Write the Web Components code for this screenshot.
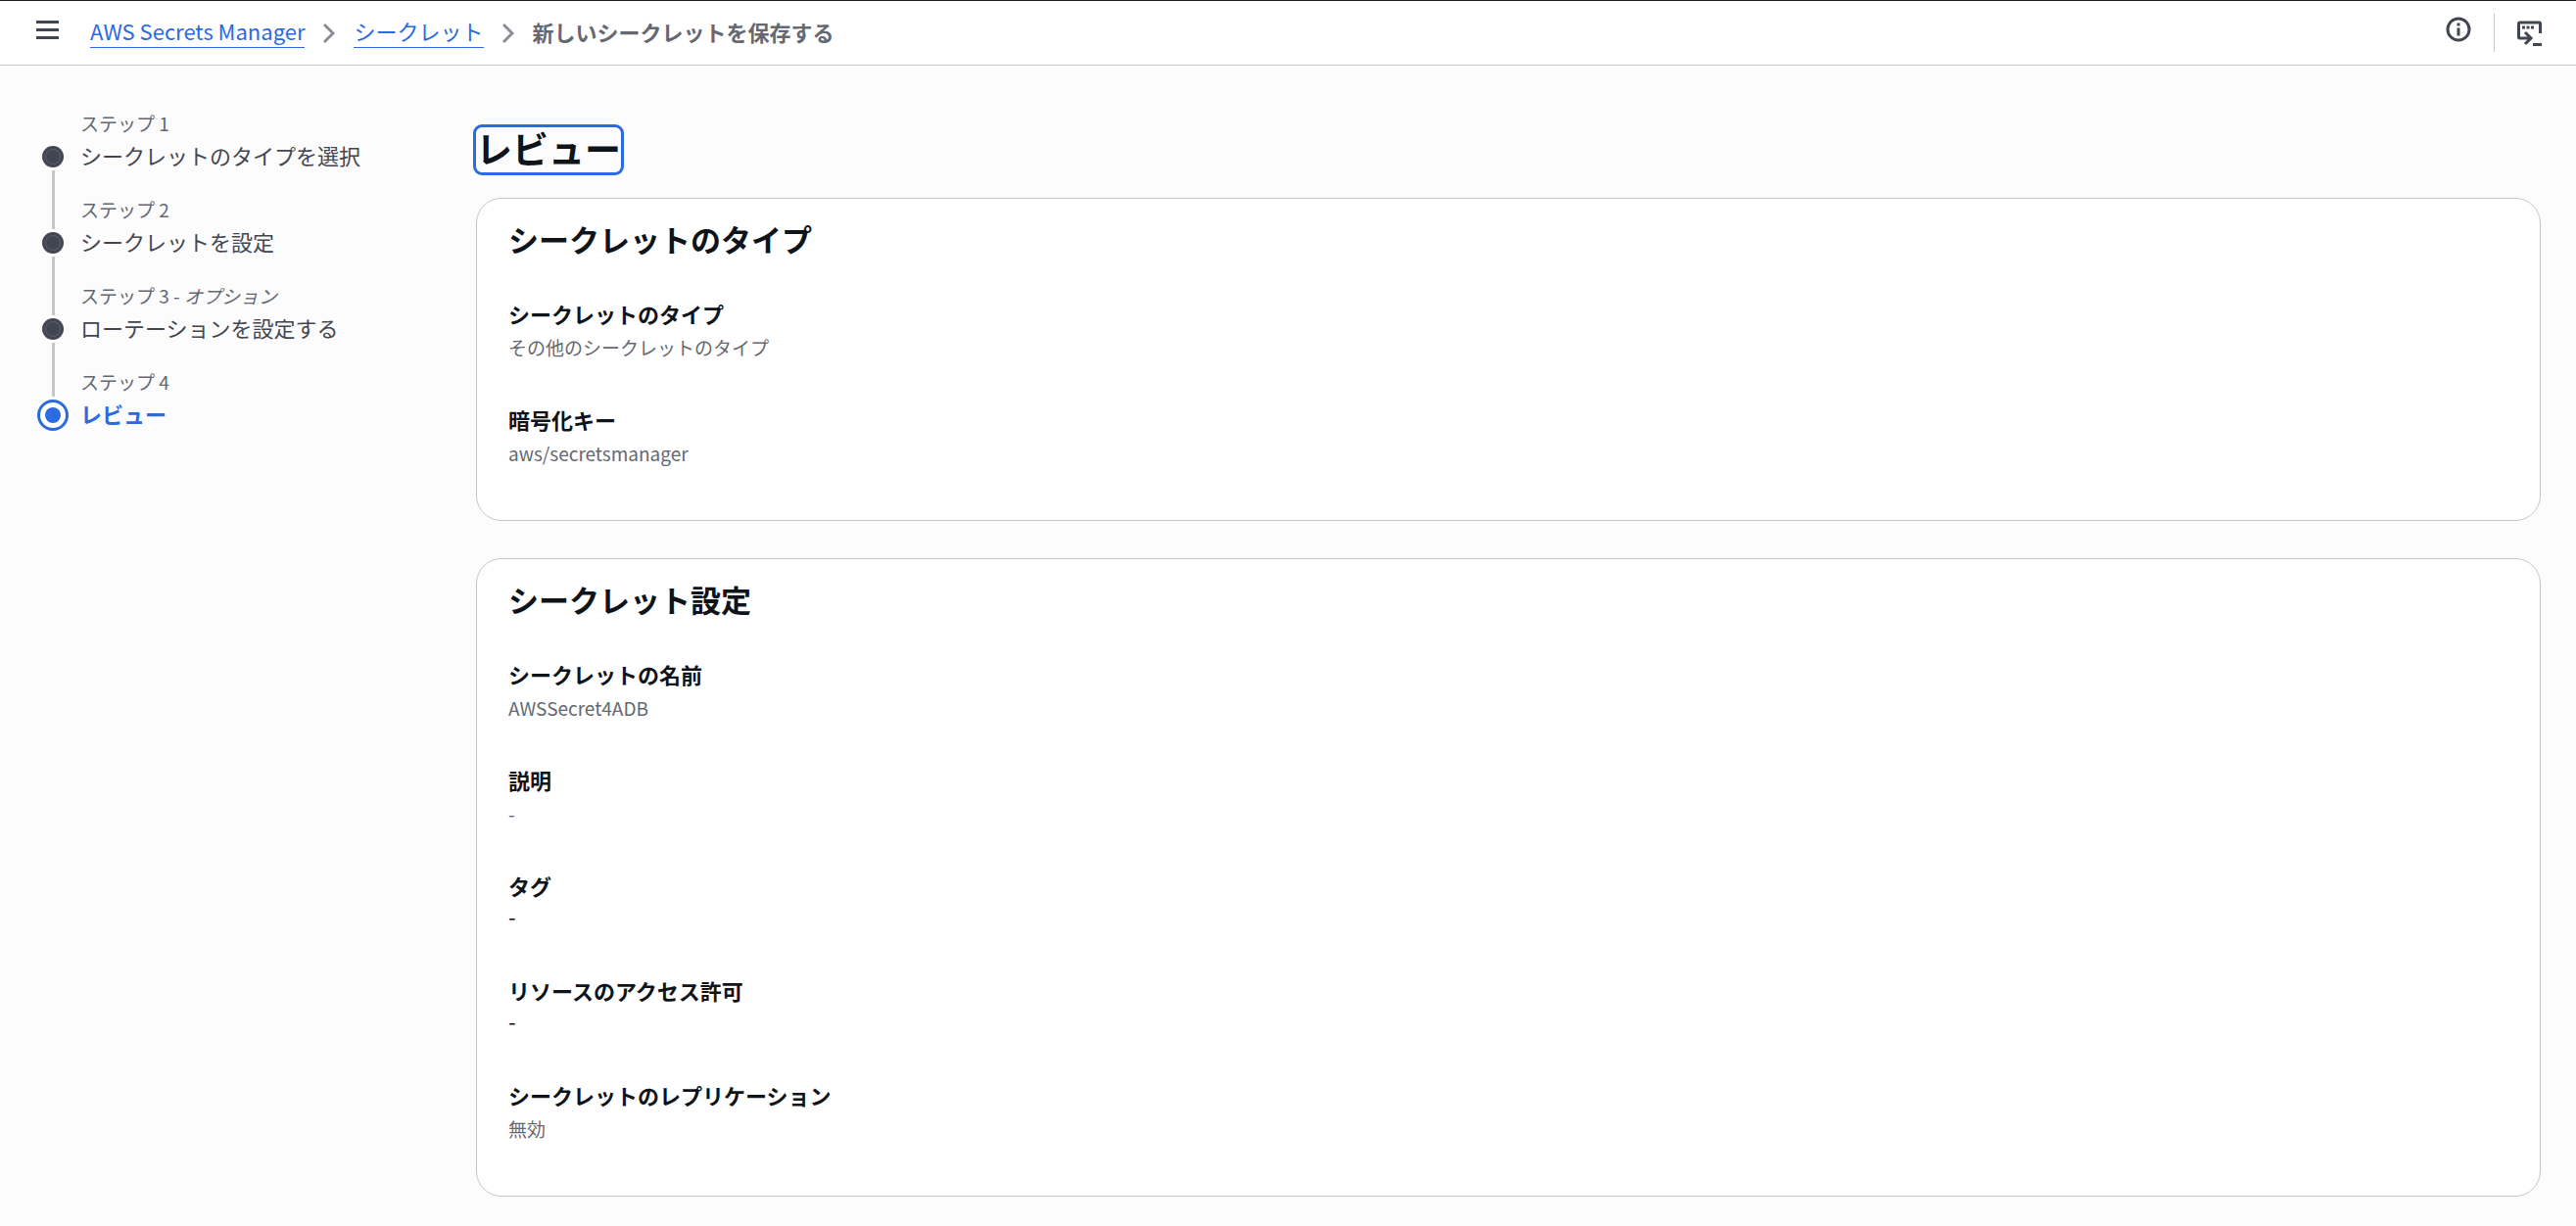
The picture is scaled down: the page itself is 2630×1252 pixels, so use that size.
<!DOCTYPE html>
<html lang="ja">
<head>
<meta charset="utf-8">
<title>新しいシークレットを保存する</title>
<style>
  :root {
    --blue: #2b6adf;
    --ink: #0f141a;
    --body: #424650;
    --muted: #656871;
    --line: #c6c6cd;
  }
  * { box-sizing: border-box; }
  body {
    margin: 0;
    background: #fcfcfd;
    color: var(--ink);
    font: 22px/32px "Noto Sans CJK JP", sans-serif;
  }
</style>
</head>
<body>
<secrets-page></secrets-page>

<script>
  function define(name, html) {
    const template = document.createElement('template');
    template.innerHTML = '<style>*{box-sizing:border-box}</style>' + html;
    customElements.define(name, class extends HTMLElement {
      constructor() {
        super();
        this.attachShadow({ mode: 'open' }).append(template.content.cloneNode(true));
      }
    });
  }

  define('icon-button', `
    <style>
      :host { display: block; }
      button { display: block; padding: 0; border: 0; background: none; color: var(--body); cursor: pointer; }
    </style>
    <button type="button"><slot></slot></button>`);

  define('crumb-link', `
    <style>
      :host { display: block; }
      a { display: block; color: var(--blue); text-decoration: none; line-height: 26px; padding-bottom: 4px; border-bottom: 1px solid currentColor; }
    </style>
    <a href="#"><slot></slot></a>`);

  define('crumb-arrow', `
    <style>:host, svg { display: block; }</style>
    <svg width="12" height="22" viewBox="0 0 12 22" fill="none" stroke="#8c8c94" stroke-width="3" aria-hidden="true"><path d="M1 2l9 9-9 9"/></svg>`);

  define('top-bar', `
    <style>
      :host { display: block; }
      header { display: flex; align-items: center; height: 67px; padding: 0 35px 0 36px; background: #fff; border-top: 1px solid #1b1b20; border-bottom: 1px solid var(--line); }
      svg { display: block; }
      nav { display: flex; align-items: center; gap: 19px; margin-left: 30px; flex: 1; }
      strong { font-weight: 700; color: var(--muted); line-height: 26px; padding-bottom: 4px; }
      .raised { margin-bottom: 8px; }
      .divider { width: 1px; height: 39px; background: var(--line); margin: 0 23px; }
    </style>
    <header>
      <icon-button class="raised"><svg width="26" height="26" viewBox="0 0 26 26" fill="none" stroke="currentColor" stroke-width="3" role="img" aria-label="メニュー"><path d="M1 5.500h23M1 13.500h23M1 21.500h23"/></svg></icon-button>
      <nav aria-label="パンくずリスト">
        <crumb-link>AWS Secrets Manager</crumb-link>
        <crumb-arrow></crumb-arrow>
        <crumb-link>シークレット</crumb-link>
        <crumb-arrow></crumb-arrow>
        <strong>新しいシークレットを保存する</strong>
      </nav>
      <icon-button class="raised"><svg width="26" height="26" viewBox="0 0 26 26" fill="none" stroke="currentColor" stroke-width="3" role="img" aria-label="情報"><circle cx="13" cy="13" r="11"/><path d="M13 6.500v3M13 11.500v8"/></svg></icon-button>
      <span class="divider"></span>
      <icon-button><svg width="25" height="26" viewBox="0 0 25 26" fill="none" stroke="currentColor" stroke-width="3" role="img" aria-label="CloudShell"><path d="M23.500 13V3a1 1 0 0 0-1-1H2.500a1 1 0 0 0-1 1v14a1 1 0 0 0 1 1H13M8 12l6 6-6 6"/><path d="M5 7h3M9.500 7h3M14 7h3M16 24.500h9" /></svg></icon-button>
    </header>`);

  define('step-item', `
    <style>
      :host { display: grid; grid-template-columns: 32px 1fr; column-gap: 12px; height: 88px; }
      .rail { display: flex; flex-direction: column; align-items: center; }
      .top { height: 33px; width: 3px; background: var(--line); }
      .rest { flex: 1; width: 3px; background: var(--line); }
      .dot { width: 22px; height: 22px; margin: 3px 0; border-radius: 50%; background: var(--body); border: 3px solid var(--body); display: grid; }
      .dot::before { content: ""; border-radius: 50%; border: 1px solid #5b5f68; }
      .count { display: block; font-size: 19px; line-height: 26px; color: var(--muted); }
      .name { display: block; line-height: 32px; margin-top: 3px; color: var(--body); }
      :host([first]) .top, :host([current]) .rest { background: none; }
      :host([current]) .top { height: 28px; }
      :host([current]) .dot { width: 32px; height: 32px; background: #fff; border-color: var(--blue); padding: 5px; }
      :host([current]) .dot::before { background: var(--blue); border: 0; }
      :host([current]) .name { color: var(--blue); font-weight: 700; }
    </style>
    <div class="rail"><span class="top"></span><span class="dot"></span><span class="rest"></span></div>
    <div class="text"><span class="count"><slot name="count"></slot></span><span class="name"><slot></slot></span></div>`);

  define('step-nav', `
    <style>:host, nav { display: block; }</style>
    <nav aria-label="ステップ">
      <step-item first><span slot="count">ステップ 1</span>シークレットのタイプを選択</step-item>
      <step-item><span slot="count">ステップ 2</span>シークレットを設定</step-item>
      <step-item><span slot="count">ステップ 3 - <i>オプション</i></span>ローテーションを設定する</step-item>
      <step-item current><span slot="count">ステップ 4</span>レビュー</step-item>
    </nav>`);

  define('review-card', `
    <style>
      :host { display: block; background: #fff; border: 1px solid var(--line); border-radius: 26px; padding: 22px 32px 55px; }
      h2 { margin: 0 0 41px; font-size: 31px; line-height: 38px; font-weight: 700; }
      .fields { display: flex; flex-direction: column; gap: 44px; }
    </style>
    <h2><slot name="title"></slot></h2>
    <div class="fields"><slot></slot></div>`);

  define('review-field', `
    <style>
      :host { display: block; }
      .label { font-weight: 700; line-height: 32px; }
      .value { font-size: 19px; line-height: 27px; padding-top: 5px; color: var(--muted); }
      :host([plain]) .value { font-size: 22px; line-height: 31px; padding-top: 0; color: var(--ink); }
    </style>
    <div class="label"><slot name="label"></slot></div>
    <div class="value"><slot></slot></div>`);

  define('secrets-page', `
    <style>
      :host { display: block; }
      .layout { display: grid; grid-template-columns: 410px minmax(0, 1fr); column-gap: 38px; padding: 46px 36px 28px 38px; }
      main { display: flex; flex-direction: column; gap: 38px; padding-top: 17px; }
      h1 { margin: 0 0 -12px; padding-bottom: 4px; align-self: flex-start; font-size: 37px; line-height: 42px; font-weight: 700; outline: 3px solid var(--blue); border-radius: 6px; }
    </style>
    <top-bar></top-bar>
    <div class="layout">
      <step-nav></step-nav>
      <main>
        <h1 tabindex="-1">レビュー</h1>
        <review-card>
          <span slot="title">シークレットのタイプ</span>
          <review-field><span slot="label">シークレットのタイプ</span>その他のシークレットのタイプ</review-field>
          <review-field><span slot="label">暗号化キー</span>aws/secretsmanager</review-field>
        </review-card>
        <review-card>
          <span slot="title">シークレット設定</span>
          <review-field><span slot="label">シークレットの名前</span>AWSSecret4ADB</review-field>
          <review-field><span slot="label">説明</span>-</review-field>
          <review-field plain><span slot="label">タグ</span>-</review-field>
          <review-field plain><span slot="label">リソースのアクセス許可</span>-</review-field>
          <review-field><span slot="label">シークレットのレプリケーション</span>無効</review-field>
        </review-card>
      </main>
    </div>`);
</script>
</body>
</html>
